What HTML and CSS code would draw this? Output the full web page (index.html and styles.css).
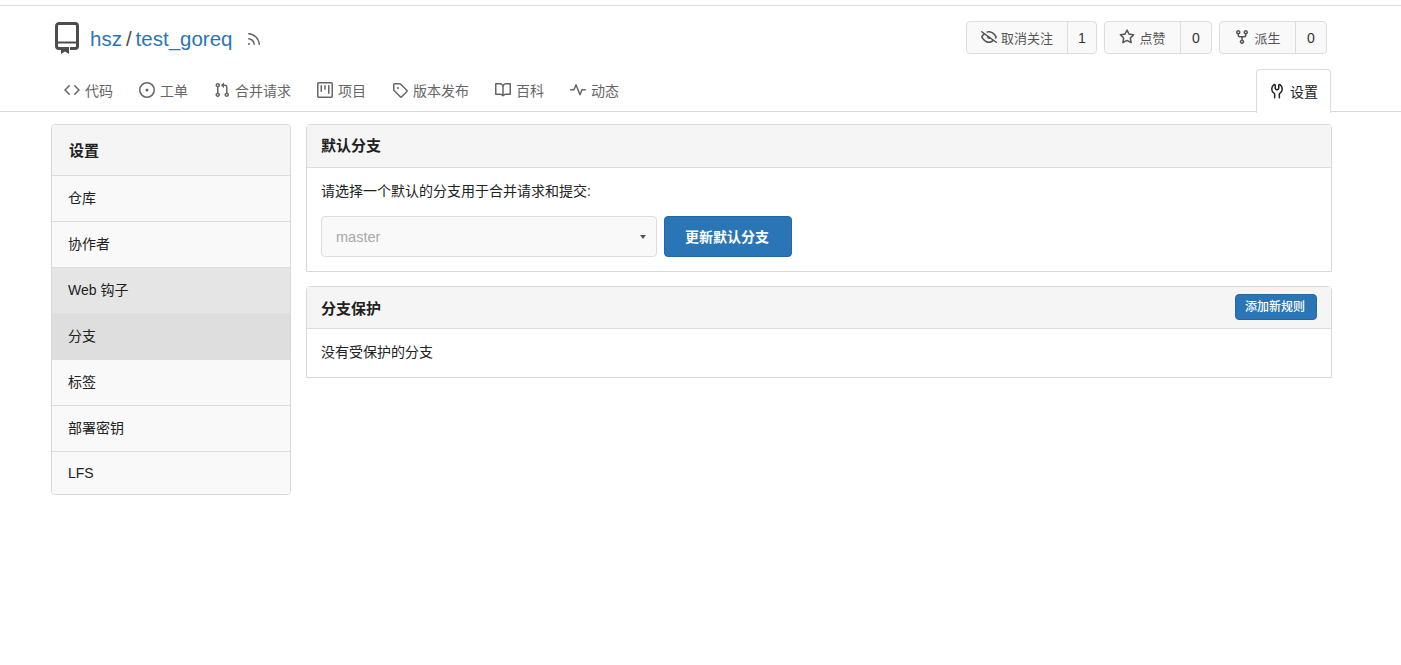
FILE: index.html
```html
<!DOCTYPE html>
<html lang="zh-CN">
<head>
    <meta charset="UTF-8">
    <title>hsz/test_goreq - 分支</title>
    <link rel="stylesheet" href="styles.css">
</head>
<body>
    <div class="repo-head">
        <div class="container title-row">
            <div class="repo-title">
                <svg class="repo-icon" viewBox="0 0 24 32" width="24" height="32">
                    <path class="repo-line" d="M6 26.500H4A2.500 2.500 0 0 1 1.500 24V4A2.500 2.500 0 0 1 4 1.500h16A2.500 2.500 0 0 1 22.500 4v20a2.500 2.500 0 0 1-2.500 2.500h-5"/>
                    <path class="repo-band" d="M1.500 20.500h21"/>
                    <path class="repo-mark" d="M6 25h8v7l-4-2.500L6 32z"/>
                </svg>
                <a href="#" class="repo-link">hsz</a>
                <span class="repo-slash">/</span>
                <a href="#" class="repo-link">test_goreq</a>
                <svg class="rss-icon" viewBox="0 0 16 16" width="16" height="16"><path d="M2.002 2.725a.75.75 0 01.797-.699C8.79 2.42 13.58 7.21 13.974 13.201a.75.75 0 11-1.497.098 10.502 10.502 0 00-9.776-9.776.75.75 0 01-.7-.798zM2 13a1 1 0 112 0 1 1 0 01-2 0zm.84-5.950a.75.75 0 00-.179 1.489c2.509.3 4.5 2.291 4.8 4.8a.75.75 0 101.49-.179A6.991 6.991 0 002.84 7.050z"/></svg>
            </div>
            <div class="repo-buttons">
                <div class="btn-group">
                    <span class="btn-label watch">
                        <svg viewBox="0 0 16 16" width="16" height="16"><path d="M.143 2.31a.75.75 0 011.047-.167l14.5 10.5a.75.75 0 11-.88 1.214l-2.248-1.628C11.346 13.19 9.792 14 8 14c-1.981 0-3.67-.992-4.933-2.078C1.797 10.832.88 9.577.43 8.9a1.618 1.618 0 010-1.797c.353-.533.995-1.42 1.868-2.305L.31 3.357A.75.75 0 01.143 2.31zm3.386 3.378a14.21 14.21 0 00-1.850 2.244.12.12 0 00-.022.068c0 .021.006.045.022.068.412.621 1.242 1.750 2.366 2.717C5.175 11.758 6.527 12.500 8 12.500c1.195 0 2.310-.488 3.290-1.191L9.063 9.695A2 2 0 016.058 7.520l-2.530-1.832zM8 3.500c-.516 0-1.017.090-1.499.251a.75.75 0 11-.473-1.423A6.230 6.230 0 018 2c1.981 0 3.670.992 4.933 2.078 1.270 1.091 2.187 2.345 2.637 3.023a1.619 1.619 0 010 1.798c-.110.166-.248.365-.410.587a.75.75 0 11-1.210-.887c.148-.201.272-.382.371-.530a.119.119 0 000-.137c-.412-.621-1.242-1.750-2.366-2.717C10.825 4.242 9.473 3.500 8 3.500z"/></svg>
                        取消关注
                    </span>
                    <span class="btn-count count-narrow">1</span>
                </div>
                <div class="btn-group">
                    <span class="btn-label star">
                        <svg viewBox="0 0 16 16" width="16" height="16"><path d="M8 .25a.75.75 0 01.673.418l1.882 3.815 4.21.612a.75.75 0 01.416 1.279l-3.046 2.97.719 4.192a.75.75 0 01-1.088.791L8 12.347l-3.766 1.98a.75.75 0 01-1.088-.79l.72-4.194L.818 6.374a.75.75 0 01.416-1.28l4.21-.611L7.327.668A.75.75 0 018 .25zm0 2.445L6.615 5.500a.75.75 0 01-.564.410l-3.097.450 2.240 2.184a.75.75 0 01.216.664l-.528 3.084 2.769-1.456a.75.75 0 01.698 0l2.770 1.456-.530-3.084a.75.75 0 01.216-.664l2.240-2.183-3.096-.450a.75.75 0 01-.564-.410L8 2.694v.001z"/></svg>
                        点赞
                    </span>
                    <span class="btn-count">0</span>
                </div>
                <div class="btn-group">
                    <span class="btn-label fork">
                        <svg viewBox="0 0 16 16" width="16" height="16"><path d="M5 3.250a.75.75 0 11-1.500 0 .75.75 0 011.500 0zm0 2.122a2.250 2.250 0 10-1.500 0v.878A2.250 2.250 0 005.750 8.500h1.500v2.128a2.251 2.251 0 101.500 0V8.500h1.500a2.250 2.250 0 002.250-2.250v-.878a2.250 2.250 0 10-1.500 0v.878a.75.75 0 01-.75.75h-4.500A.75.75 0 015 6.250v-.878zm3.750 7.378a.75.75 0 11-1.500 0 .75.75 0 011.500 0zm3-8.750a.75.75 0 100-1.500.75.75 0 000 1.500z"/></svg>
                        派生
                    </span>
                    <span class="btn-count">0</span>
                </div>
            </div>
        </div>
        <div class="container tabs">
            <a href="#" class="tab"><svg viewBox="0 0 16 16" width="16" height="16"><path d="M4.720 3.220a.75.75 0 011.060 1.060L2.060 8l3.720 3.720a.75.75 0 11-1.060 1.060L.470 8.530a.75.75 0 010-1.060l4.250-4.250zm6.560 0a.75.75 0 10-1.060 1.060L13.940 8l-3.720 3.720a.75.75 0 101.060 1.060l4.250-4.250a.75.75 0 000-1.060l-4.250-4.250z"/></svg>代码</a>
            <a href="#" class="tab"><svg viewBox="0 0 16 16" width="16" height="16"><path d="M8 9.500a1.500 1.500 0 100-3 1.500 1.500 0 000 3z"/><path d="M8 0a8 8 0 100 16A8 8 0 008 0zM1.500 8a6.500 6.500 0 1113 0 6.500 6.500 0 01-13 0z"/></svg>工单</a>
            <a href="#" class="tab"><svg viewBox="0 0 16 16" width="16" height="16"><path d="M7.177 3.073L9.573.677A.25.25 0 0110 .854v4.792a.25.25 0 01-.427.177L7.177 3.427a.25.25 0 010-.354zM3.750 2.500a.75.75 0 100 1.500.75.75 0 000-1.500zm-2.250.75a2.250 2.250 0 113 2.122v5.256a2.251 2.251 0 11-1.500 0V5.372A2.250 2.250 0 011.500 3.250zM11 2.500h-1V4h1a1 1 0 011 1v5.628a2.251 2.251 0 101.500 0V5A2.500 2.500 0 0011 2.500zm1 10.250a.75.75 0 111.500 0 .75.75 0 01-1.500 0zM3.750 12a.75.75 0 100 1.500.75.75 0 000-1.500z"/></svg>合并请求</a>
            <a href="#" class="tab"><svg viewBox="0 0 16 16" width="16" height="16"><path d="M1.750 0A1.750 1.750 0 000 1.750v12.500C0 15.216.784 16 1.750 16h12.500A1.750 1.750 0 0016 14.250V1.750A1.750 1.750 0 0014.250 0H1.750zM1.500 1.750a.25.25 0 01.25-.25h12.500a.25.25 0 01.25.25v12.500a.25.25 0 01-.25.25H1.750a.25.25 0 01-.25-.25V1.750zM11.750 3a.75.75 0 00-.75.75v7.500a.75.75 0 001.500 0v-7.500a.75.75 0 00-.75-.75zm-8.250.75a.75.75 0 011.500 0v5.500a.75.75 0 01-1.500 0v-5.500zM8 3a.75.75 0 00-.75.75v3.500a.75.75 0 001.500 0v-3.500A.75.75 0 008 3z"/></svg>项目</a>
            <a href="#" class="tab"><svg viewBox="0 0 16 16" width="16" height="16"><path d="M2.500 7.775V2.750a.25.25 0 01.25-.25h5.025a.25.25 0 01.177.073l6.250 6.250a.25.25 0 010 .354l-5.025 5.025a.25.25 0 01-.354 0l-6.250-6.250a.25.25 0 01-.073-.177zm-1.500 0V2.750C1 1.784 1.784 1 2.750 1h5.025c.464 0 .91.184 1.238.513l6.250 6.250a1.750 1.750 0 010 2.474l-5.026 5.026a1.750 1.750 0 01-2.474 0l-6.250-6.250A1.750 1.750 0 011 7.775zM6 5a1 1 0 100 2 1 1 0 000-2z"/></svg>版本发布</a>
            <a href="#" class="tab"><svg viewBox="0 0 16 16" width="16" height="16"><path d="M0 1.750A.75.75 0 01.75 1h4.253c1.227 0 2.317.59 3 1.501A3.744 3.744 0 0111.006 1h4.245a.75.75 0 01.75.75v10.500a.75.75 0 01-.75.75h-4.507a2.250 2.250 0 00-1.591.659l-.622.621a.75.75 0 01-1.060 0l-.622-.621A2.250 2.250 0 005.258 13H.75a.75.75 0 01-.75-.75V1.750zm8.755 3a2.250 2.250 0 012.250-2.250H14.500v9h-3.757c-.71 0-1.400.201-1.992.572l.004-7.322zm-1.504 7.324l.004-5.073-.002-2.253A2.250 2.250 0 005.003 2.500H1.500v9h3.757a3.750 3.750 0 011.994.574z"/></svg>百科</a>
            <a href="#" class="tab"><svg viewBox="0 0 16 16" width="16" height="16"><path d="M6 2a.75.75 0 01.696.471L10 10.731l1.304-3.260A.75.75 0 0112 7h3.250a.75.75 0 010 1.500h-2.742l-1.812 4.528a.75.75 0 01-1.392 0L6 4.770 4.696 8.030A.75.75 0 014 8.500H.75a.75.75 0 010-1.500h2.742l1.812-4.529A.75.75 0 016 2z"/></svg>动态</a>
            <a href="#" class="tab tab-active"><svg viewBox="0 0 16 16" width="16" height="16"><path d="M5.433 2.304A4.494 4.494 0 003.500 6c0 1.598.832 3.002 2.090 3.802.518.328.929.923.902 1.640v.008l-.164 3.337a.75.75 0 11-1.498-.073l.163-3.330c.002-.085-.05-.216-.207-.316A5.996 5.996 0 012 6a5.994 5.994 0 012.567-4.920 1.482 1.482 0 011.673-.04c.462.296.76.827.76 1.423v2.820c0 .082.041.16.11.206l.75.51a.25.25 0 00.28 0l.75-.51A.25.25 0 009 5.282V2.463c0-.596.298-1.127.76-1.423a1.482 1.482 0 011.673.04A5.994 5.994 0 0114 6a5.996 5.996 0 01-2.786 5.068c-.157.1-.209.23-.207.315l.163 3.330a.75.75 0 11-1.498.074l-.164-3.345c-.027-.717.384-1.312.902-1.640A4.496 4.496 0 0012.500 6a4.494 4.494 0 00-1.933-3.696c-.024.017-.067.067-.067.16v2.818a1.750 1.750 0 01-.767 1.448l-.75.51a1.750 1.750 0 01-1.966 0l-.75-.51A1.750 1.750 0 015.500 5.282V2.463c0-.092-.043-.142-.067-.159z"/></svg>设置</a>
        </div>
    </div>

    <div class="container content">
        <div class="side-menu">
            <div class="side-title">设置</div>
            <a href="#" class="side-item">仓库</a>
            <a href="#" class="side-item">协作者</a>
            <a href="#" class="side-item hovered">Web 钩子</a>
            <a href="#" class="side-item selected">分支</a>
            <a href="#" class="side-item">标签</a>
            <a href="#" class="side-item">部署密钥</a>
            <a href="#" class="side-item">LFS</a>
        </div>
        <div class="main">
            <div class="panel">
                <div class="panel-head">默认分支</div>
                <div class="panel-body">
                    <p class="hint">请选择一个默认的分支用于合并请求和提交:</p>
                    <div class="branch-form">
                        <div class="branch-select">
                            <span>master</span>
                            <i class="caret"></i>
                        </div>
                        <button class="btn-primary">更新默认分支</button>
                    </div>
                </div>
            </div>
            <div class="panel">
                <div class="panel-head head-small">
                    <span class="head-text">分支保护</span>
                    <button class="btn-primary btn-tiny">添加新规则</button>
                </div>
                <div class="panel-body body-small">没有受保护的分支</div>
            </div>
        </div>
    </div>
</body>
</html>
```

FILE: styles.css
```css
* {
    box-sizing: border-box;
}

body {
    margin: 0;
    font-family: "Liberation Sans", "Noto Sans CJK SC", sans-serif;
    font-size: 14px;
    color: #212121;
    background: #fff;
}

a {
    text-decoration: none;
    color: inherit;
}

svg {
    fill: currentColor;
    fill-rule: evenodd;
    flex: none;
}

.container {
    width: 1281px;
    margin-left: 51px;
}

.repo-head {
    margin-top: 5px;
    height: 107px;
    border-top: 1px solid #ddd;
    border-bottom: 1px solid #d8d8d8;
}

.title-row {
    display: flex;
    justify-content: space-between;
    height: 63px;
    padding: 15px 5px 0 4px;
}

.repo-title {
    display: flex;
    align-items: center;
    height: 33px;
    font-size: 20.5px;
}

.repo-icon {
    color: #4c4c4c;
    margin: 1px 11px 0 0;
}

.repo-line {
    fill: none;
    stroke: currentColor;
    stroke-width: 3;
}

.repo-band {
    fill: none;
    stroke: currentColor;
    stroke-width: 2;
}

.repo-mark {
    fill: currentColor;
}

.repo-link {
    padding-top: 2px;
    color: #2a75b5;
}

.repo-slash {
    margin: 0 4px;
    padding-top: 2px;
    color: #4c4c4c;
}

.rss-icon {
    color: #666;
    margin: 2px 0 0 14px;
}

.repo-buttons {
    display: flex;
    gap: 7px;
}

.btn-group {
    display: flex;
    height: 33px;
    border: 1px solid #ddd;
    border-radius: 4px;
    background: #f9f9f9;
    font-size: 13px;
    color: #555;
}

.btn-label {
    display: flex;
    align-items: center;
    justify-content: center;
    gap: 4px;
    padding-bottom: 1px;
    border-right: 1px solid #ddd;
}

.watch {
    width: 101px;
}

.star {
    width: 76px;
}

.fork {
    width: 76px;
}

.btn-count {
    display: flex;
    align-items: center;
    justify-content: center;
    width: 30px;
    font-size: 14px;
    color: #333;
}

.count-narrow {
    width: 28px;
}

.tabs {
    display: flex;
    align-items: flex-end;
    height: 43px;
    padding-left: 13px;
}

.tab {
    display: flex;
    align-items: center;
    height: 43px;
    gap: 5px;
    margin-right: 26px;
    padding-bottom: 2px;
    color: #666;
    font-size: 14px;
}

.tab-active {
    height: 44px;
    width: 75px;
    margin: 0 1px -1px auto;
    padding: 0 0 1px 12px;
    background: #fff;
    border: 1px solid #ddd;
    border-bottom: 0;
    border-radius: 4px 4px 0 0;
    color: #212121;
}

.content {
    display: flex;
    gap: 15px;
    margin-top: 12px;
}

.side-menu {
    width: 240px;
    border: 1px solid #d8d8d8;
    border-radius: 4px;
    overflow: hidden;
    align-self: flex-start;
}

.side-title {
    height: 50px;
    padding-left: 17px;
    line-height: 52px;
    font-size: 15px;
    font-weight: bold;
    background: #f5f5f5;
}

.side-item {
    display: block;
    height: 46px;
    padding-left: 16px;
    line-height: 45px;
    font-size: 14px;
    background: #f9f9f9;
    border-top: 1px solid #ddd;
}

.side-item:last-child {
    height: 43px;
    line-height: 42px;
}

.side-item.hovered {
    background: #e5e5e5;
}

.side-item.selected {
    background: #dedede;
    border-top-color: #e0e0e0;
}

.main {
    width: 1026px;
    display: flex;
    flex-direction: column;
    gap: 14px;
}

.panel {
    border: 1px solid #d8d8d8;
    border-radius: 4px 4px 0 0;
}

.panel-head {
    display: flex;
    align-items: center;
    justify-content: space-between;
    height: 43px;
    padding: 0 14px 4px;
    font-size: 15px;
    font-weight: bold;
    background: #f5f5f5;
    border-bottom: 1px solid #ddd;
}

.head-small {
    height: 42px;
    padding-bottom: 2px;
}

.head-text {
    padding-top: 2px;
}

.panel-body {
    height: 103px;
    padding: 14px;
    font-size: 14px;
}

.body-small {
    height: 48px;
    padding-top: 12px;
}

.hint {
    margin: 0;
    line-height: 18px;
}

.branch-form {
    display: flex;
    gap: 7px;
    margin-top: 16px;
}

.branch-select {
    display: flex;
    align-items: center;
    justify-content: space-between;
    width: 336px;
    height: 41px;
    padding: 0 14px;
    font-size: 14.5px;
    color: #a8a8a8;
    background: #f9f9f9;
    border: 1px solid #ddd;
    border-radius: 4px;
}

.caret {
    width: 0;
    height: 0;
    margin-right: -4px;
    border: 3.5px solid transparent;
    border-top: 4px solid #555;
    border-bottom: 0;
}

.btn-primary {
    width: 128px;
    height: 41px;
    padding: 0 2px 2px 0;
    font-family: inherit;
    font-size: 14px;
    font-weight: bold;
    color: #fff;
    background: #2a75b5;
    border: 1px solid #2368a3;
    border-radius: 4px;
}

.btn-tiny {
    width: 82px;
    height: 26px;
    font-size: 12px;
    font-weight: 500;
}
```
